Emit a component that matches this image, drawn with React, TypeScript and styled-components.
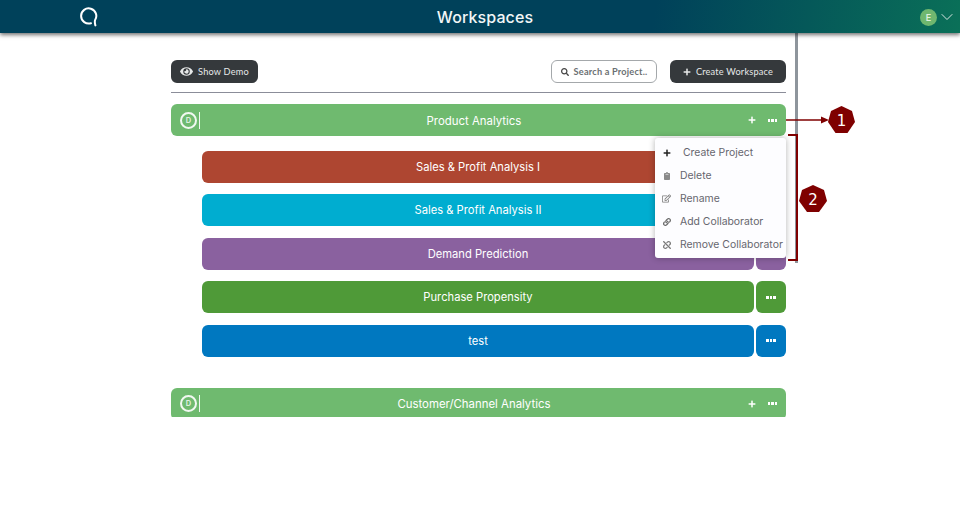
import { createGlobalStyle, styled } from 'styled-components'
import { ChevronDown } from 'lucide-react'
import { FaEye, FaPlus, FaSearch, FaClipboard, FaRegEdit, FaLink, FaUnlink } from 'react-icons/fa'

const GlobalStyle = createGlobalStyle`
  html, body {
    margin: 0;
    padding: 0;
    background: #fff;
    font-family: "Inter", "Liberation Sans", sans-serif;
  }
  * { box-sizing: border-box; }
`

const projects = [
  { name: 'Sales & Profit Analysis I', color: '#ae4631' },
  { name: 'Sales & Profit Analysis II', color: '#00add0' },
  { name: 'Demand Prediction', color: '#8a619f' },
  { name: 'Purchase Propensity', color: '#4f9a38' },
  { name: 'test', color: '#0078c0' }
]

const menuItems = [
  { label: 'Create Project', icon: <FaPlus size={8} color="#222" />, wide: true },
  { label: 'Delete', icon: <FaClipboard size={8} color="#8a8a8a" /> },
  { label: 'Rename', icon: <FaRegEdit size={9} color="#7a7a7a" /> },
  { label: 'Add Collaborator', icon: <FaLink size={8} color="#666" /> },
  { label: 'Remove Collaborator', icon: <FaUnlink size={8} color="#777" /> }
]

const Dots = () => (
  <DotsIcon>
    <i />
    <i />
    <i />
  </DotsIcon>
)

const SectionHead = ({ title }: { title: string }) => (
  <SectionBar>
    <Badge>D</Badge>
    <Divider />
    <SectionTitle>{title}</SectionTitle>
    <SectionActions>
      <FaPlus size={8} color="#fff" />
      <Dots />
    </SectionActions>
  </SectionBar>
)

const App = () => (
  <Page>
    <GlobalStyle />
    <Header>
      <Logo>
        <svg width="18" height="20" viewBox="0 0 18 20" fill="none">
          <path
            d="M11 16.2A7.6 7.6 0 1 1 15 13.2C14.7 15 14.8 16.6 15.4 18.4"
            stroke="#fff"
            strokeWidth="2"
            strokeLinecap="round"
            strokeLinejoin="round"
          />
        </svg>
      </Logo>
      <HeaderTitle>Workspaces</HeaderTitle>
      <UserBox>
        <Avatar>E</Avatar>
        <ChevronDown size={20} color="#d8e6e2" strokeWidth={1.2} />
      </UserBox>
    </Header>

    <Scroller>
      <ScrollThumb />
      <Column>
        <Toolbar>
          <DarkButton $width={87}>
            <FaEye size={13} />
            Show Demo
          </DarkButton>
          <ToolbarRight>
            <SearchBox>
              <FaSearch size={8} color="#444" />
              Search a Project..
            </SearchBox>
            <DarkButton $width={116}>
              <FaPlus size={8} />
              Create Workspace
            </DarkButton>
          </ToolbarRight>
        </Toolbar>

        <SectionHead title="Product Analytics" />
        <ProjectList>
          {projects.map(project => (
            <ProjectRow key={project.name}>
              <ProjectName $color={project.color}>{project.name}</ProjectName>
              <ProjectMore $color={project.color}>
                <Dots />
              </ProjectMore>
            </ProjectRow>
          ))}
        </ProjectList>

        <SectionHead title="Customer/Channel Analytics" />

        <Menu>
          {menuItems.map(item => (
            <MenuItem key={item.label} $wide={item.wide}>
              <MenuIcon>{item.icon}</MenuIcon>
              {item.label}
            </MenuItem>
          ))}
        </Menu>
      </Column>
    </Scroller>

    <Callout1>
      <svg width="70" height="30" viewBox="0 0 70 30">
        <path d="M0 15H37" stroke="#7f0000" strokeWidth="1.6" />
        <path d="M35 11.5L43 15L35 18.5Z" fill="#7f0000" />
        <polygon points="55.5,1 66,6 69,17 61.5,28 49.5,28 42,17 45,6" fill="#7f0000" />
        <text x="55.5" y="21" fill="#fff" fontSize="15" textAnchor="middle" fontFamily="DejaVu Sans, sans-serif">
          1
        </text>
      </svg>
    </Callout1>
    <Bracket />
    <Callout2>
      <svg width="28" height="28" viewBox="0 0 28 28">
        <polygon points="14,0 25,5 28,16 20,27 8,27 0,16 3,5" fill="#7f0000" />
        <text x="14" y="20" fill="#fff" fontSize="15" textAnchor="middle" fontFamily="DejaVu Sans, sans-serif">
          2
        </text>
      </svg>
    </Callout2>
  </Page>
)

export default App

const Page = styled.div`
  position: relative;
  width: 960px;
  height: 517px;
  overflow: hidden;
  background: #fff;
`

const Header = styled.header`
  position: relative;
  z-index: 2;
  height: 33px;
  display: flex;
  align-items: center;
  justify-content: center;
  background: linear-gradient(100deg, #00415a 0%, #00415a 68%, #0a7058 100%);
  box-shadow: 0 2px 4px rgba(0, 0, 0, 0.55);
`

const Logo = styled.div`
  position: absolute;
  left: 80px;
  top: 7px;
  line-height: 0;
`

const HeaderTitle = styled.h1`
  margin: 0;
  color: #f2f6f7;
  font-size: 16px;
  font-weight: 500;
  letter-spacing: 0.1px;
  transform: translateX(5px);
`

const UserBox = styled.div`
  position: absolute;
  right: 3px;
  top: 7px;
  display: flex;
  align-items: center;
`

const Avatar = styled.div`
  width: 17px;
  height: 17px;
  border-radius: 50%;
  background: #6fb76f;
  color: #dff0df;
  font-size: 9px;
  font-weight: 600;
  display: flex;
  align-items: center;
  justify-content: center;
`

const Scroller = styled.main`
  position: relative;
  height: 384px;
  overflow: hidden;
  padding-left: 171px;
`

const ScrollThumb = styled.div`
  position: absolute;
  left: 795px;
  top: 0;
  width: 3px;
  height: 230px;
  background: #8e959c;
`

const Column = styled.div`
  position: relative;
  width: 615px;
  padding-top: 27px;
`

const Toolbar = styled.div`
  display: flex;
  justify-content: space-between;
  height: 33px;
  padding-bottom: 10px;
  border-bottom: 1px solid #8b8d99;
  margin-bottom: 11px;
`

const ToolbarRight = styled.div`
  display: flex;
  gap: 13px;
`

const DarkButton = styled.button<{ $width: number }>`
  width: ${({ $width }) => $width}px;
  height: 23px;
  padding: 0;
  border: none;
  border-radius: 6px;
  background: #35393c;
  color: #e6e8e8;
  font-family: "Lato", "Open Sans", sans-serif;
  font-size: 9.2px;
  letter-spacing: 0.2px;
  display: flex;
  align-items: center;
  justify-content: center;
  gap: 5px;
`

const SearchBox = styled.div`
  width: 106px;
  height: 23px;
  border: 1px solid #a4a8ab;
  border-radius: 6px;
  background: #fff;
  color: #6b6f72;
  font-family: "Lato", "Open Sans", sans-serif;
  font-size: 9.2px;
  font-weight: 700;
  letter-spacing: 0.2px;
  display: flex;
  align-items: center;
  justify-content: center;
  gap: 5px;
`

const SectionBar = styled.div`
  height: 32px;
  border-radius: 6px;
  background: #6fba6f;
  color: #fff;
  display: flex;
  align-items: center;
  padding-left: 9px;
`

const Badge = styled.div`
  width: 17px;
  height: 17px;
  border: 2px solid #f1f8f1;
  border-radius: 50%;
  color: #e6f3e6;
  font-size: 7.5px;
  font-weight: 600;
  display: flex;
  align-items: center;
  justify-content: center;
`

const Divider = styled.div`
  width: 1px;
  height: 17px;
  margin-left: 2px;
  background: #eef7ee;
`

const SectionTitle = styled.div`
  flex: 1;
  text-align: center;
  font-size: 11.4px;
  font-weight: 400;
  padding-top: 1px;
`

const SectionActions = styled.div`
  display: flex;
  align-items: center;
  gap: 12px;
  padding-right: 9px;
`

const DotsIcon = styled.span`
  display: inline-flex;
  gap: 1px;
  i {
    display: block;
    width: 2.4px;
    height: 3px;
    background: #fff;
  }
`

const ProjectList = styled.div`
  display: flex;
  flex-direction: column;
  gap: 11.5px;
  padding: 14.6px 0 31.2px 31px;
`

const ProjectRow = styled.div`
  display: flex;
  gap: 2px;
  height: 32px;
`

const ProjectName = styled.div<{ $color: string }>`
  flex: 1;
  border-radius: 6px;
  background: ${({ $color }) => $color};
  color: #fff;
  font-size: 11.2px;
  font-weight: 400;
  display: flex;
  align-items: center;
  justify-content: center;
`

const ProjectMore = styled.div<{ $color: string }>`
  width: 30px;
  border-radius: 6px;
  background: ${({ $color }) => $color};
  display: flex;
  align-items: center;
  justify-content: center;
`

const Menu = styled.div`
  position: absolute;
  left: 484px;
  top: 105px;
  width: 131px;
  height: 120px;
  padding-top: 3px;
  background: #fdfdff;
  border-radius: 3px;
  box-shadow: 0 0 6px rgba(0, 0, 0, 0.3);
`

const MenuItem = styled.div<{ $wide?: boolean }>`
  height: 23px;
  display: flex;
  align-items: center;
  padding-left: 7px;
  color: #66666e;
  font-size: 10.4px;
  white-space: nowrap;
  & > span {
    margin-right: ${({ $wide }) => ($wide ? 12 : 9)}px;
  }
`

const MenuIcon = styled.span`
  width: 9px;
  display: inline-flex;
  justify-content: center;
`

const Callout1 = styled.div`
  position: absolute;
  left: 786px;
  top: 105px;
  line-height: 0;
`

const Bracket = styled.div`
  position: absolute;
  left: 788px;
  top: 134px;
  width: 10px;
  height: 127px;
  border: 2px solid #7f0000;
  border-left: none;
`

const Callout2 = styled.div`
  position: absolute;
  left: 799px;
  top: 185px;
  line-height: 0;
`
